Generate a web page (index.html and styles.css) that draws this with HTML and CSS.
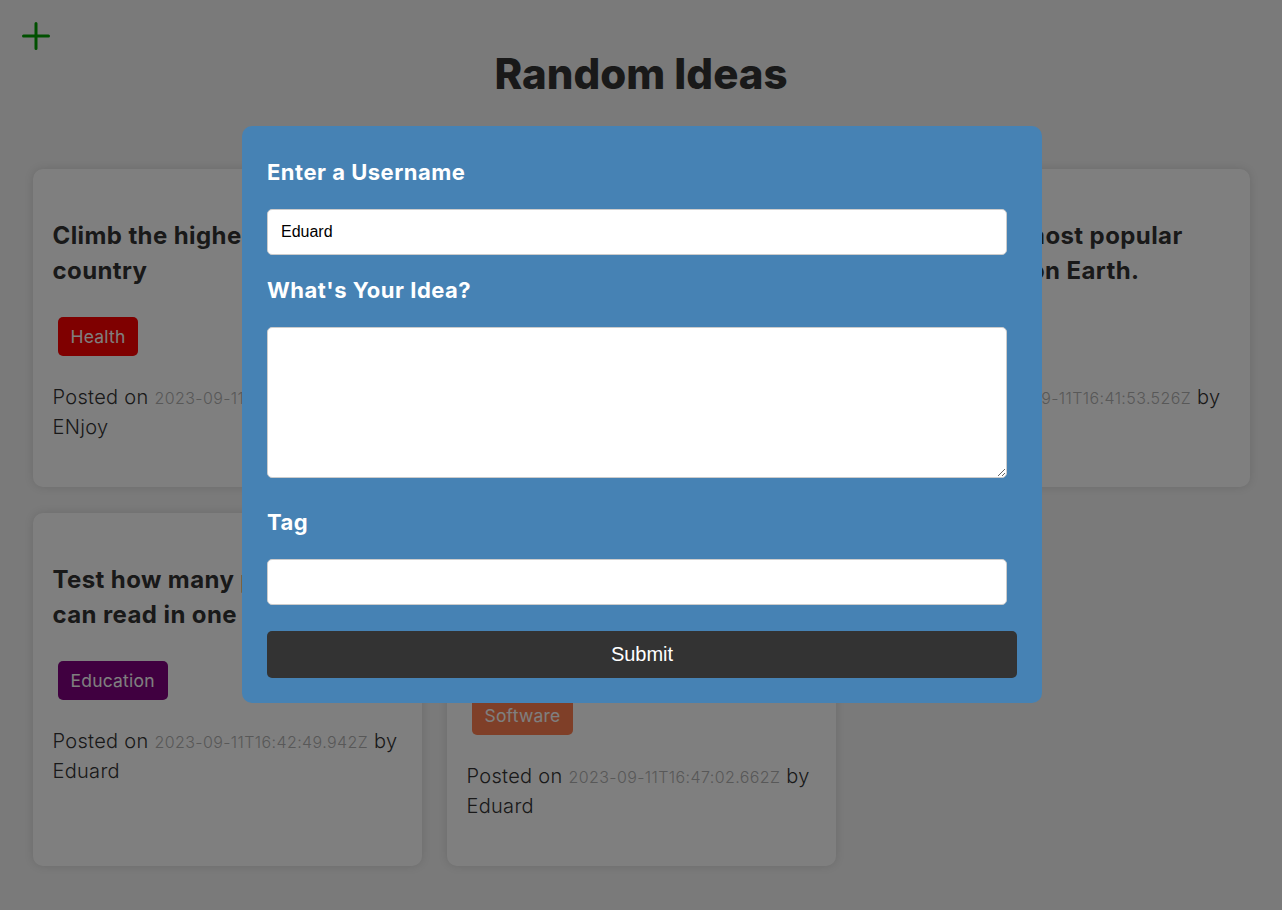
FILE: index.html
```html
<!DOCTYPE html>
<html lang="en">
<head>
<meta charset="utf-8">
<title>Random Ideas</title>
<link rel="stylesheet" href="styles.css">
</head>
<body>
<div class="page">
  <header class="header">
    <button class="add-btn" type="button" aria-label="Add idea">
      <svg width="28" height="28" viewBox="0 0 28 28" aria-hidden="true">
        <path d="M14 1.5V26.5M1.5 14H26.5" stroke="currentColor" stroke-width="3" stroke-linecap="round" fill="none"/>
      </svg>
    </button>
    <h1 class="title">Random Ideas</h1>
  </header>

  <main class="cards">
    <article class="card">
      <h3 class="card-title">Climb the highest mountain country</h3>
      <span class="tag tag-health">Health</span>
      <p class="posted">Posted on <span class="date">2023-09-11T16:40:12.318Z</span> by <span class="author">ENjoy</span></p>
    </article>
    <article class="card">
      <h3 class="card-title">Learn to play a new musical instrument</h3>
      <span class="tag tag-music">Music</span>
      <p class="posted">Posted on <span class="date">2023-09-11T16:41:05.104Z</span> by <span class="author">Eduard</span></p>
    </article>
    <article class="card">
      <h3 class="card-title">Explore the most popular monuments on Earth.</h3>
      <span class="tag tag-travel">Travel</span>
      <p class="posted">Posted on <span class="date">2023-09-11T16:41:53.526Z</span> by <span class="author">Eduard</span></p>
    </article>
    <article class="card">
      <h3 class="card-title">Test how many poems you can read in one hour</h3>
      <span class="tag tag-education">Education</span>
      <p class="posted">Posted on <span class="date">2023-09-11T16:42:49.942Z</span> by <span class="author">Eduard</span></p>
    </article>
    <article class="card">
      <h3 class="card-title">Build a small app that tracks daily habits and sends reminders</h3>
      <span class="tag tag-software">Software</span>
      <p class="posted">Posted on <span class="date">2023-09-11T16:47:02.662Z</span> by <span class="author">Eduard</span></p>
    </article>
  </main>
</div>

<div class="backdrop"></div>

<div class="modal" role="dialog" aria-label="Add idea">
  <form class="idea-form">
    <label class="form-label" for="username">Enter a Username</label>
    <input class="form-input" id="username" type="text" value="Eduard">

    <label class="form-label" for="idea-text">What's Your Idea?</label>
    <textarea class="form-input form-textarea" id="idea-text"></textarea>

    <label class="form-label" for="tag">Tag</label>
    <input class="form-input" id="tag" type="text">

    <button class="submit-btn" type="button">Submit</button>
  </form>
</div>
</body>
</html>
```

FILE: styles.css
```css
* {
  box-sizing: border-box;
}

body {
  margin: 0;
  background: #f4f4f4;
  color: #333;
  font-family: "Inter", "Noto Sans", sans-serif;
}

.page {
  min-height: 100vh;
}

.header {
  display: flex;
  flex-direction: column;
}

.add-btn {
  display: block;
  width: 28px;
  height: 28px;
  margin: 22px 0 0 22px;
  padding: 0;
  border: none;
  background: none;
  color: #00a000;
  cursor: pointer;
}

.add-btn svg {
  display: block;
}

.title {
  margin: 0;
  text-align: center;
  font-size: 42px;
  line-height: 48px;
  font-weight: 800;
  color: #333;
}

.cards {
  width: 1217px;
  margin: 71px auto 0;
  display: grid;
  grid-template-columns: repeat(3, 1fr);
  gap: 26px 25px;
}

.card {
  display: flex;
  flex-direction: column;
  align-items: flex-start;
  padding: 20px;
  background: #fff;
  border-radius: 10px;
  box-shadow: 0 0 10px rgba(0, 0, 0, 0.12);
}

.card-title {
  margin: 29px 0 0;
  font-size: 24px;
  line-height: 35px;
  letter-spacing: 0.4px;
  font-weight: 700;
  color: #333;
}

.tag {
  margin: 29px 0 0 5px;
  padding: 7px 13px;
  font-size: 17.5px;
  line-height: 25px;
  letter-spacing: 0.2px;
  color: #fff;
  border-radius: 5px;
}

.tag-health { background: #ff0000; }
.tag-education { background: #800080; }
.tag-software { background: #ff7f50; }
.tag-travel { background: #008b8b; }
.tag-music { background: #4169e1; }

.posted {
  margin: 26px 0 25px;
  font-size: 20px;
  line-height: 30px;
  letter-spacing: 0.3px;
  font-weight: 300;
  color: #333;
}

.date {
  font-size: 16px;
  line-height: 1;
  letter-spacing: 0.4px;
  color: #b0b0b0;
}

.backdrop {
  position: fixed;
  inset: 0;
  background: rgba(0, 0, 0, 0.5);
}

.modal {
  position: fixed;
  top: 126px;
  left: 242px;
  width: 800px;
  padding: 25px;
  background: #4682b4;
  border-radius: 10px;
}

.idea-form {
  display: flex;
  flex-direction: column;
}

.form-label {
  margin: 6px 0 22px;
  font-size: 22px;
  line-height: 30px;
  letter-spacing: 0.5px;
  font-weight: 700;
  color: #fff;
}

.form-input {
  display: block;
  width: calc(100% - 10px);
  height: 46px;
  margin: 0 0 14px;
  padding: 0 13px;
  border: 1px solid #ccc;
  border-radius: 5px;
  background: #fff;
  font-family: "Liberation Sans", Arial, sans-serif;
  font-size: 16px;
  color: #000;
}

.form-textarea {
  height: 151px;
  margin-bottom: 23px;
  padding: 10px 13px;
  resize: vertical;
}

.form-input + .submit-btn {
  margin-top: 12px;
}

.submit-btn {
  display: block;
  width: 100%;
  height: 47px;
  padding: 0;
  border: none;
  border-radius: 5px;
  background: #333;
  color: #fff;
  font-family: "Liberation Sans", Arial, sans-serif;
  font-size: 20px;
  cursor: pointer;
}
```
